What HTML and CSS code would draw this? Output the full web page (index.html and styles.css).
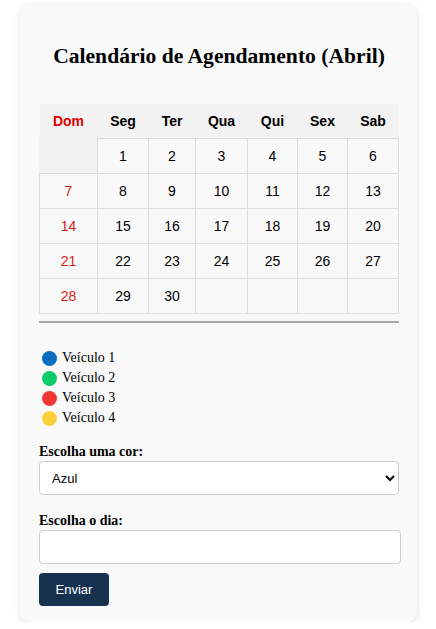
FILE: index.html
```html
<!DOCTYPE html>
<html lang="pt">
<head>
<meta charset="utf-8">
<link rel="stylesheet" href="styles.css">
</head>
<body>
<div class="card">
  <h2 class="title">Calendário de Agendamento (Abril)</h2>
  <table class="cal">
    <thead>
      <tr>
        <th class="sun">Dom</th><th>Seg</th><th>Ter</th><th>Qua</th><th>Qui</th><th>Sex</th><th>Sab</th>
      </tr>
    </thead>
    <tbody>
      <tr><td class="blank"></td><td>1</td><td>2</td><td>3</td><td>4</td><td>5</td><td>6</td></tr>
      <tr><td class="sun">7</td><td>8</td><td>9</td><td>10</td><td>11</td><td>12</td><td>13</td></tr>
      <tr><td class="sun">14</td><td>15</td><td>16</td><td>17</td><td>18</td><td>19</td><td>20</td></tr>
      <tr><td class="sun">21</td><td>22</td><td>23</td><td>24</td><td>25</td><td>26</td><td>27</td></tr>
      <tr><td class="sun">28</td><td>29</td><td>30</td><td></td><td></td><td></td><td></td></tr>
    </tbody>
  </table>
  <hr class="sep">
  <ul class="legend">
    <li><span class="dot blue"></span>Veículo 1</li>
    <li><span class="dot green"></span>Veículo 2</li>
    <li><span class="dot red"></span>Veículo 3</li>
    <li><span class="dot yellow"></span>Veículo 4</li>
  </ul>
  <form class="form">
    <label class="lbl" for="cor">Escolha uma cor:</label>
    <select id="cor" class="sel">
      <option>Azul</option>
      <option>Verde</option>
      <option>Vermelho</option>
      <option>Amarelo</option>
    </select>
    <label class="lbl lbl2" for="dia">Escolha o dia:</label>
    <input id="dia" class="inp" type="text">
    <button type="button" class="btn">Enviar</button>
  </form>
</div>
</body>
</html>
```
FILE: styles.css
```css
html, body {
  margin: 0;
  padding: 0;
  background: #fff;
}
body {
  font-family: "Liberation Serif", "Times New Roman", serif;
  color: #000;
}
.card {
  width: 397px;
  box-sizing: border-box;
  margin: 4px 0 0 20px;
  padding: 1px 18px 16px 19px;
  background: #f9f9f9;
  border-radius: 10px;
  box-shadow: 0 2px 6px rgba(0, 0, 0, 0.12);
}
.title {
  font-size: 21.6px;
  font-weight: bold;
  text-align: center;
  margin: 38px 0 35px;
  line-height: 26px;
}
.cal {
  width: 360px;
  border-collapse: collapse;
  font-family: "Liberation Sans", Arial, sans-serif;
  font-size: 14px;
  table-layout: fixed;
}
.cal th {
  background: #f2f2f2;
  height: 34px;
  font-weight: bold;
  padding: 0;
  border: none;
}
.cal th:nth-child(1) { width: 58px; }
.cal th:nth-child(2) { width: 51px; }
.cal th:nth-child(3) { width: 47px; }
.cal th:nth-child(4) { width: 52px; }
.cal th:nth-child(5) { width: 50px; }
.cal th:nth-child(6) { width: 50px; }
.cal td {
  border: 1px solid #ddd;
  height: 34px;
  text-align: center;
  padding: 0;
}
.cal td.blank {
  background: #f2f2f2;
  border-left-color: #f2f2f2;
  border-top-color: #f2f2f2;
}
.sun {
  color: #e00000;
}
.cal td.sun {
  color: #d91a1a;
}
.sep {
  margin: 7px 0 0;
  border: none;
  border-top: 2px solid #a8a8a8;
  height: 0;
}
.legend {
  list-style: none;
  margin: 25px 0 0 3px;
  padding: 0;
  font-size: 14px;
}
.legend li {
  display: flex;
  align-items: center;
  height: 20px;
}
.dot {
  width: 15px;
  height: 15px;
  border-radius: 50%;
  margin-right: 5px;
  display: inline-block;
}
.blue { background: #0a6ebd; }
.green { background: #0ccc6a; }
.red { background: #f23535; }
.yellow { background: #fcd03a; }
.form {
  display: flex;
  flex-direction: column;
  align-items: flex-start;
  margin-top: 16px;
}
.lbl {
  font-weight: bold;
  font-size: 14px;
  line-height: 16px;
  margin-bottom: 1px;
}
.lbl2 {
  margin-top: 18px;
}
.sel {
  width: 360px;
  height: 34px;
  box-sizing: border-box;
  border: 1px solid #ccc;
  border-radius: 4px;
  background: #fff;
  font-family: "Liberation Sans", Arial, sans-serif;
  font-size: 13px;
  padding: 0 8px;
  color: #000;
}
.inp {
  width: 362px;
  height: 34px;
  box-sizing: border-box;
  border: 1px solid #ccc;
  border-radius: 4px;
  background: #fff;
  margin: 0;
}
.btn {
  margin-top: 9px;
  width: 70px;
  height: 33px;
  background: #17324f;
  color: #fff;
  border: none;
  border-radius: 4px;
  font-family: "Liberation Sans", Arial, sans-serif;
  font-size: 13px;
  padding: 0;
}
```
